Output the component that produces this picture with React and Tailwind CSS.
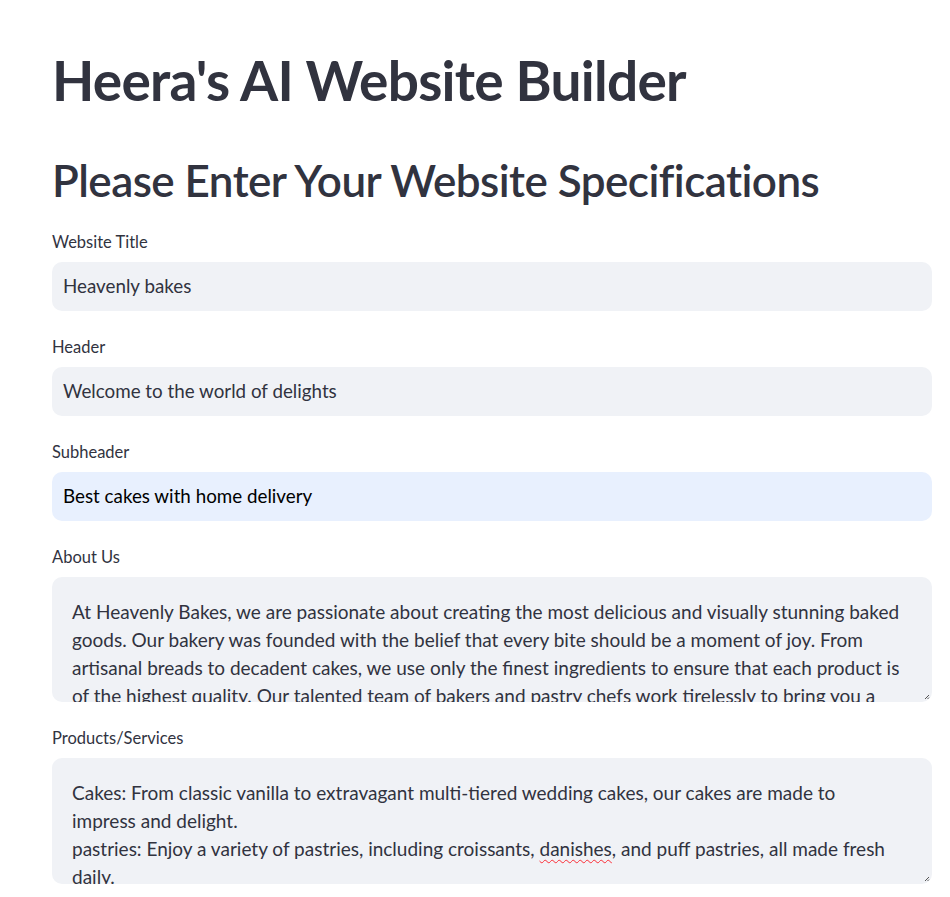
import React from "react";

const aboutLines = [
  "At Heavenly Bakes, we are passionate about creating the most delicious and visually stunning baked",
  "goods. Our bakery was founded with the belief that every bite should be a moment of joy. From",
  "artisanal breads to decadent cakes, we use only the finest ingredients to ensure that each product is",
  "of the highest quality. Our talented team of bakers and pastry chefs work tirelessly to bring you a",
];

function Grip() {
  return (
    <svg className="absolute right-[2px] bottom-[2px]" width="6" height="6" viewBox="0 0 6 6">
      <path d="M5 1 L1 5 M5 3.5 L3.5 5" stroke="#555" strokeWidth="1" />
    </svg>
  );
}

function Field({ label, value, active }) {
  return (
    <div className="mb-[26px]">
      <div className="text-[16.5px] leading-[21px] mb-[9px]">{label}</div>
      <div
        className={`h-[49px] rounded-[10px] flex items-center px-[11px] text-[18.8px] ${
          active ? "bg-[#e8f0fe] text-black" : "bg-[#f0f2f6]"
        }`}
      >
        {value}
      </div>
    </div>
  );
}

function Area({ label, height, children }) {
  return (
    <div className="mb-[26px]">
      <div className="text-[16.5px] leading-[21px] mb-[9px]">{label}</div>
      <div
        className="relative rounded-[10px] bg-[#f0f2f6] overflow-hidden pl-[20px] pt-[21px] text-[19px] leading-[28px]"
        style={{ height }}
      >
        {children}
        <Grip />
      </div>
    </div>
  );
}

export default function App() {
  return (
    <div
      className="min-h-screen bg-white text-[#31333f]"
      style={{ fontFamily: "Lato, 'Noto Sans', sans-serif" }}
    >
      <div className="pl-[52px] pr-[18px] pt-[47px]">
        <h1 className="text-[55px] leading-[67px] font-bold tracking-[-0.75px]">Heera's AI Website Builder</h1>
        <h2 className="mt-[39px] text-[44px] leading-[55px] font-semibold tracking-[-0.55px] mb-[24px]">
          Please Enter Your Website Specifications
        </h2>
        <Field label="Website Title" value="Heavenly bakes" />
        <Field label="Header" value="Welcome to the world of delights" />
        <Field label="Subheader" value="Best cakes with home delivery" active />
        <Area label="About Us" height={125}>
          {aboutLines.map((l) => (
            <div key={l} className="whitespace-nowrap">{l}</div>
          ))}
        </Area>
        <Area label="Products/Services" height={126}>
          <div className="whitespace-nowrap">
            Cakes: From classic vanilla to extravagant multi-tiered wedding cakes, our cakes are made to
          </div>
          <div className="whitespace-nowrap">impress and delight.</div>
          <div className="whitespace-nowrap">
            pastries: Enjoy a variety of pastries, including croissants,{" "}
            <span className="underline decoration-wavy decoration-red-500 decoration-1 underline-offset-[3px]">danishes</span>, and puff pastries, all made fresh
          </div>
          <div className="whitespace-nowrap">daily.</div>
        </Area>
      </div>
    </div>
  );
}
